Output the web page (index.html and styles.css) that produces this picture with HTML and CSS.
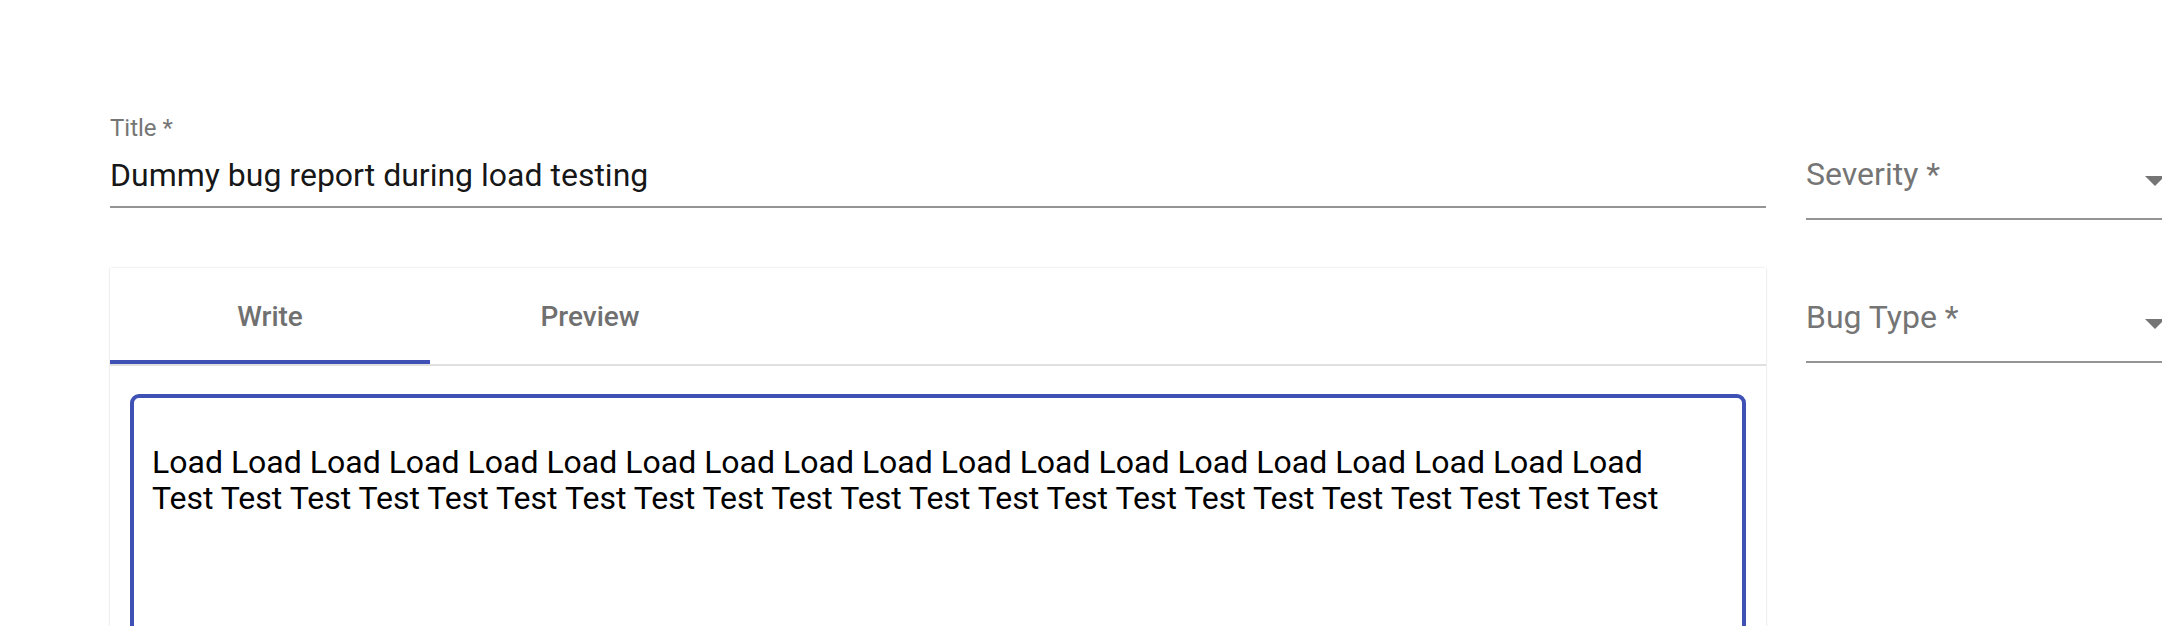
FILE: index.html
```html
<!DOCTYPE html>
<html lang="en">
<head>
<meta charset="utf-8">
<title>Bug report</title>
<link rel="stylesheet" href="styles.css">
</head>
<body>
<div class="page">
  <div class="left">
    <div class="field">
      <label class="field-label">Title *</label>
      <div class="field-input">Dummy bug report during load testing</div>
    </div>
    <div class="card">
      <div class="tabs">
        <div class="tab tab-active">Write</div>
        <div class="tab">Preview</div>
      </div>
      <div class="card-body">
        <div class="editor">
          <div class="editor-line">Load Load Load Load Load Load Load Load Load Load Load Load Load Load Load Load Load Load Load</div>
          <div class="editor-line">Test Test Test Test Test Test Test Test Test Test Test Test Test Test Test Test Test Test Test Test Test Test</div>
        </div>
      </div>
    </div>
  </div>
  <div class="right">
    <div class="select select-first">
      <span class="select-label">Severity *</span>
      <svg class="select-arrow" viewBox="7 10 10 5" width="20" height="10"><path d="M7 10l5 5 5-5z" fill="#757575"/></svg>
    </div>
    <div class="select select-second">
      <span class="select-label">Bug Type *</span>
      <svg class="select-arrow" viewBox="7 10 10 5" width="20" height="10"><path d="M7 10l5 5 5-5z" fill="#757575"/></svg>
    </div>
  </div>
</div>
</body>
</html>
```
FILE: styles.css
```css
html, body {
  margin: 0;
  padding: 0;
  overflow: hidden;
  background: #ffffff;
}
body {
  font-family: Roboto, "Liberation Sans", Arial, sans-serif;
  color: rgba(0, 0, 0, 0.87);
}
.page {
  display: flex;
  align-items: flex-start;
  gap: 40px;
  padding: 112px 0 0 110px;
  width: 2179px;
  box-sizing: border-box;
}
.left {
  width: 1656px;
  flex-shrink: 0;
}
.right {
  width: 373px;
  flex-shrink: 0;
}
.field {
  padding-top: 4px;
}
.field-label {
  display: block;
  font-size: 24px;
  line-height: 24px;
  height: 24px;
  color: #757575;
}
.field-input {
  margin-top: 4px;
  padding: 12px 0;
  font-size: 32px;
  line-height: 38px;
  color: rgba(0, 0, 0, 0.92);
  border-bottom: 2px solid #949494;
}
.card {
  margin-top: 60px;
  background: #fff;
  box-shadow: 0 0 2px rgba(0, 0, 0, 0.14), 0 1px 2px rgba(0, 0, 0, 0.06);
  min-height: 420px;
}
.tabs {
  display: flex;
  border-bottom: 2px solid #e0e0e0;
}
.tab {
  width: 320px;
  height: 96px;
  display: flex;
  align-items: center;
  justify-content: center;
  font-size: 28px;
  font-weight: 500;
  color: #707070;
  box-sizing: border-box;
}
.tab-active {
  box-shadow: inset 0 -4px 0 #3f51b5;
}
.card-body {
  padding: 28px 20px 0;
}
.editor {
  border: 4px solid #3f51b5;
  border-radius: 9px;
  padding: 46px 18px;
  min-height: 300px;
  font-size: 32px;
  line-height: 36px;
  color: #000;
}
.editor-line {
  white-space: nowrap;
}
.select {
  display: flex;
  justify-content: space-between;
  align-items: flex-start;
  padding-bottom: 25px;
  border-bottom: 2px solid #949494;
}
.select-first {
  margin-top: 43px;
}
.select-second {
  margin-top: 78px;
}
.select-label {
  font-size: 32px;
  line-height: 38px;
  color: #757575;
}
.select-arrow {
  display: block;
  margin-top: 21px;
  margin-right: 14px;
}
```
